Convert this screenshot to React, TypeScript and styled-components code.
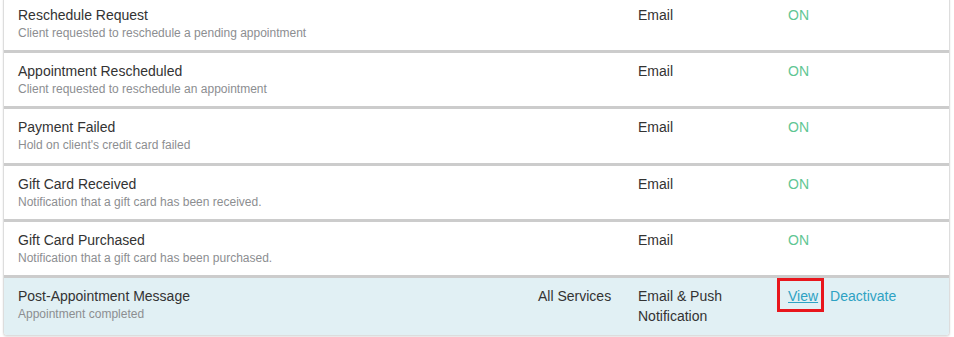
import styled, { createGlobalStyle } from 'styled-components';

const GlobalStyle = createGlobalStyle`
  html, body {
    margin: 0;
    padding: 0;
    background: #ffffff;
    font-family: "Liberation Sans", Arial, sans-serif;
  }
`;

const Page = styled.div`
  padding: 0 4px 0 3px;
  height: 337px;
  overflow: hidden;
`;

const Card = styled.div`
  margin-top: -4px;
  border: 1px solid #dddddd;
  border-radius: 4px;
  box-shadow: 0 1px 2px rgba(0, 0, 0, 0.12);
  background: #ffffff;
  overflow: hidden;
`;

const Row = styled.div<{ highlighted?: boolean; last?: boolean }>`
  display: grid;
  grid-template-columns: 1fr 100px 150px 161px;
  padding: 8px 0 9px 14px;
  min-height: 36.2px;
  background: ${({ highlighted }) => (highlighted ? '#e1f0f4' : '#ffffff')};
  border-bottom: ${({ last }) => (last ? 'none' : '3px solid #cccccc')};
`;

const NameCell = styled.div`
  display: flex;
  flex-direction: column;
`;

const Title = styled.div`
  font-size: 14px;
  line-height: 20px;
  color: #333333;
`;

const Subtitle = styled.div`
  font-size: 12px;
  line-height: 16px;
  color: #8c8e91;
`;

const Cell = styled.div`
  font-size: 14px;
  line-height: 20px;
  color: #333333;
`;

const Status = styled.div`
  font-size: 14px;
  line-height: 20px;
  color: #5fc693;
`;

const Actions = styled.div`
  display: flex;
  align-items: flex-start;
  gap: 12px;
  font-size: 14px;
  line-height: 20px;
`;

const Link = styled.a<{ marked?: boolean }>`
  position: relative;
  color: #2ea2c3;
  text-decoration: ${({ marked }) => (marked ? 'underline' : 'none')};
  cursor: pointer;

  ${({ marked }) =>
    marked &&
    `
    &::after {
      content: '';
      position: absolute;
      inset: -8px -6px -6px -11px;
      border: 3px solid #e8161c;
    }
  `}
`;

const notifications = [
  { title: 'Reschedule Request', desc: 'Client requested to reschedule a pending appointment' },
  { title: 'Appointment Rescheduled', desc: 'Client requested to reschedule an appointment' },
  { title: 'Payment Failed', desc: "Hold on client's credit card failed" },
  { title: 'Gift Card Received', desc: 'Notification that a gift card has been received.' },
  { title: 'Gift Card Purchased', desc: 'Notification that a gift card has been purchased.' },
];

const App: React.FC = () => {
  return (
    <>
      <GlobalStyle />
      <Page>
        <Card>
          {notifications.map((n) => (
            <Row key={n.title}>
              <NameCell>
                <Title>{n.title}</Title>
                <Subtitle>{n.desc}</Subtitle>
              </NameCell>
              <Cell />
              <Cell>Email</Cell>
              <Status>ON</Status>
            </Row>
          ))}
          <Row highlighted last>
            <NameCell>
              <Title>Post-Appointment Message</Title>
              <Subtitle>Appointment completed</Subtitle>
            </NameCell>
            <Cell>All Services</Cell>
            <Cell>
              Email &amp; Push
              <br />
              Notification
            </Cell>
            <Actions>
              <Link marked>View</Link>
              <Link>Deactivate</Link>
            </Actions>
          </Row>
        </Card>
      </Page>
    </>
  );
};

export default App;
